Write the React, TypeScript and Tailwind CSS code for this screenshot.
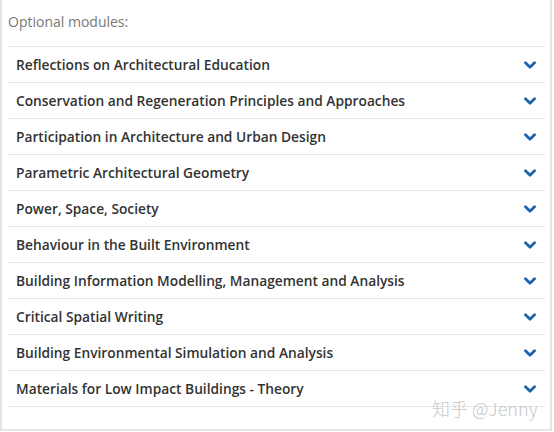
import React from "react";

const modules = [
  "Reflections on Architectural Education",
  "Conservation and Regeneration Principles and Approaches",
  "Participation in Architecture and Urban Design",
  "Parametric Architectural Geometry",
  "Power, Space, Society",
  "Behaviour in the Built Environment",
  "Building Information Modelling, Management and Analysis",
  "Critical Spatial Writing",
  "Building Environmental Simulation and Analysis",
  "Materials for Low Impact Buildings - Theory",
];

function Chevron() {
  return (
    <svg width="12" height="9" viewBox="0 0 12 9" className="mt-[2px] shrink-0">
      <path
        d="M1.5 1.8 L6 6.3 L10.5 1.8"
        fill="none"
        stroke="#1d64a8"
        strokeWidth="2.8"
        strokeLinecap="round"
        strokeLinejoin="round"
      />
    </svg>
  );
}

export default function App() {
  return (
    <div className="relative h-[432px] w-[554px] bg-white font-['Open_Sans',sans-serif]">
      <div className="h-[431px] w-[552px] border-x-2 border-b-2 border-[#e4e4e4] pl-[6px] pr-[5px]">
        <p className="pt-[11px] pb-[13px] text-[14px] leading-[22px] text-[#777]">Optional modules:</p>
        <ul className="border-b border-[#e6e6e6]">
          {modules.map((m) => (
            <li
              key={m}
              className="flex h-[36px] items-center justify-between border-t border-[#e6e6e6] pl-[8px] pr-[9px]"
            >
              <span className="pt-[2px] text-[13.75px] font-semibold text-[#333]">{m}</span>
              <Chevron />
            </li>
          ))}
        </ul>
      </div>
      <span className="absolute left-[432px] top-[395px] font-['Noto_Sans_CJK_SC',sans-serif] text-[18px] font-light text-[#c9c9c9]">
        知乎 @Jenny
      </span>
    </div>
  );
}
